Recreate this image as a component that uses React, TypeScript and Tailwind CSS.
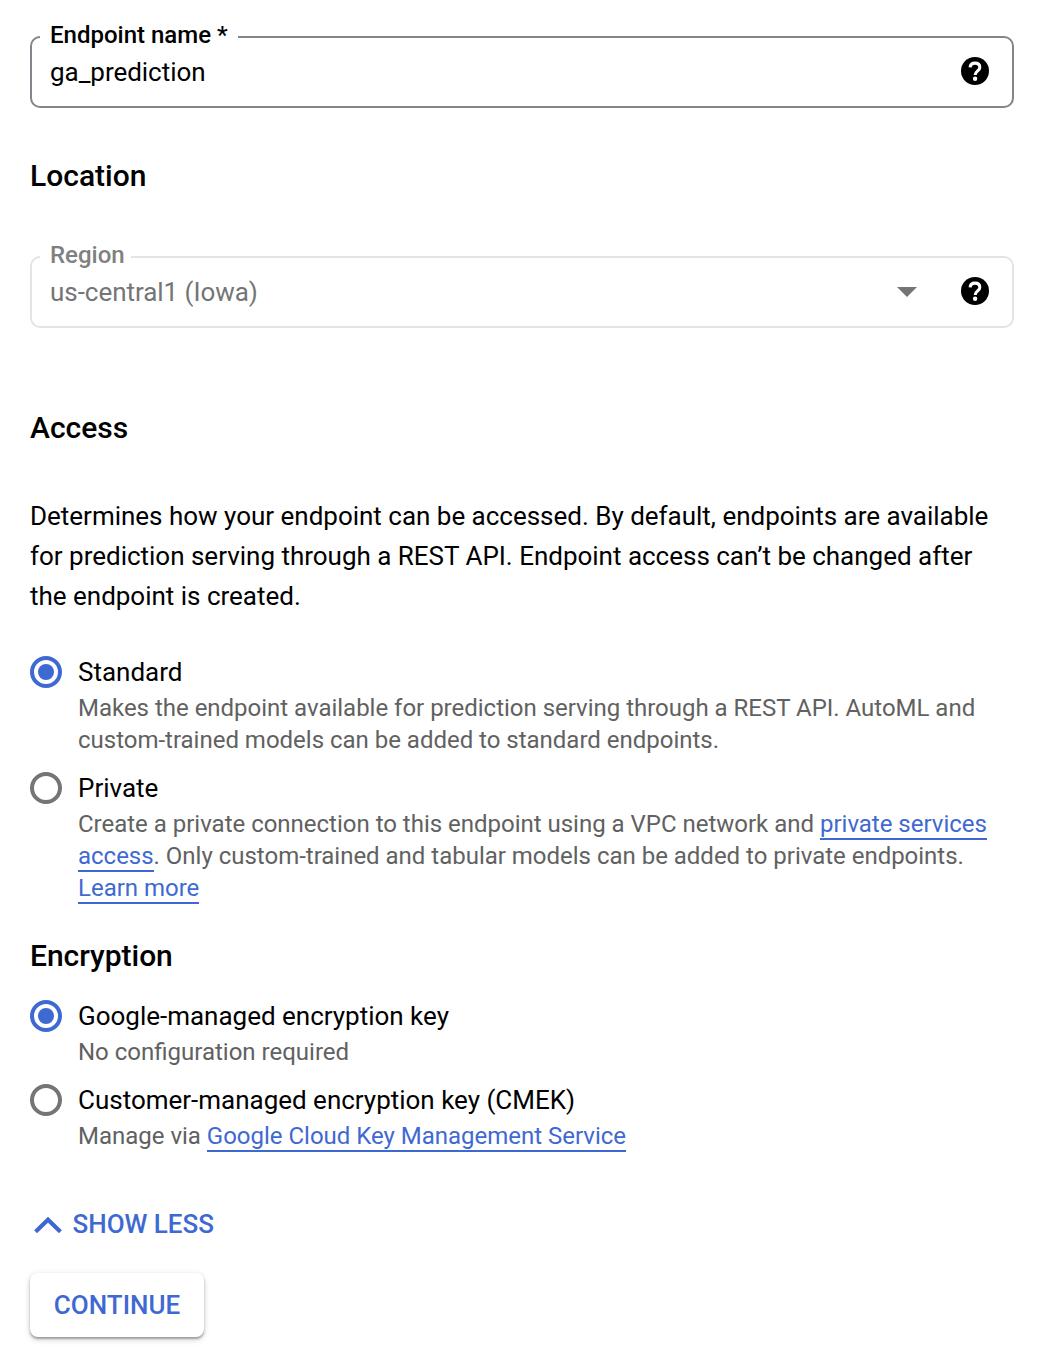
import type { ReactNode } from "react";

function Help() {
  return (
    <svg className="mb-0.5 h-[34px] w-[34px] shrink-0" viewBox="0 0 34 34">
      <circle cx="17" cy="17" r="14" fill="#000" />
      <path d="M12.1 13.4c.2-2.7 2.1-4.3 4.9-4.3 2.9 0 4.8 1.7 4.8 4.3 0 3.5-4.6 3.6-4.6 7.7" fill="none" stroke="#fff" strokeWidth="3.1" />
      <circle cx="17.1" cy="24.8" r="2.2" fill="#fff" />
    </svg>
  );
}

function Radio({ on, label, children, className }: { on?: boolean; label: string; children: ReactNode; className: string }) {
  return (
    <div className={`flex gap-4 ${className}`}>
      <div className={`mt-1 flex size-8 shrink-0 items-center justify-center rounded-full border-4 ${on ? "border-[#3f69d2]" : "border-[#757575]"}`}>
        {on && <div className="size-4 rounded-full bg-[#3f69d2]" />}
      </div>
      <div>
        <div className="text-[26px] leading-10 tracking-[-0.01px]">{label}</div>
        <div className="whitespace-nowrap text-[24px] leading-8 tracking-[-0.012px] text-[#616161]">{children}</div>
      </div>
    </div>
  );
}

function Link({ children }: { children: ReactNode }) {
  return <a className="border-b-2 border-[#3f69d2] text-[#3f69d2]">{children}</a>;
}

export default function App() {
  return (
    <main className="h-[1356px] w-[1042px] overflow-hidden bg-white px-[30px] pt-[22px] font-['Roboto',sans-serif] text-black">
      <fieldset className="h-[86px] w-[984px] rounded-[10px] border-2 border-[#80868b] pl-2 pr-[20px]">
        <legend className="h-[30px] px-[10px] text-[24px] leading-[26px] font-medium">Endpoint name *</legend>
        <div className="flex h-10 items-center justify-between pl-[10px]">
          <span className="text-[26px] tracking-[-0.04px]">ga_prediction</span>
          <Help />
        </div>
      </fieldset>
      <h2 className="mt-12 text-[30px] leading-10 font-medium">Location</h2>
      <fieldset className="mt-[46px] h-[86px] w-[984px] rounded-[10px] border-2 border-[#e4e4e4] pl-2 pr-[20px]">
        <legend className="h-[30px] pl-[10px] pr-1.5 text-[24px] leading-[26px] font-medium text-[#808080]">Region</legend>
        <div className="flex h-10 items-center pl-[10px]">
          <span className="flex-1 text-[26px] tracking-[-0.04px] text-[#757575]">us-central1 (Iowa)</span>
          <svg className="mr-[41px] h-[10px] w-5" viewBox="0 0 20 10"><path d="M0 0h20L10 10z" fill="#757575" /></svg>
          <Help />
        </div>
      </fieldset>
      <h2 className="mt-20 text-[30px] leading-10 font-medium">Access</h2>
      <p className="mt-12 whitespace-nowrap text-[26px] leading-10 tracking-[-0.012px]">
        Determines how your endpoint can be accessed. By default, endpoints are available<br />
        for prediction serving through a REST API. Endpoint access can’t be changed after<br />
        the endpoint is created.
      </p>
      <Radio on label="Standard" className="mt-9">
        Makes the endpoint available for prediction serving through a REST API. AutoML and<br />
        custom-trained models can be added to standard endpoints.
      </Radio>
      <Radio label="Private" className="mt-3">
        Create a private connection to this endpoint using a VPC network and <Link>private services<br />access</Link>. Only custom-trained and tabular models can be added to private endpoints.<br />
        <Link>Learn more</Link>
      </Radio>
      <h2 className="mt-8 text-[30px] leading-10 font-medium tracking-[-0.03px]">Encryption</h2>
      <Radio on label="Google-managed encryption key" className="mt-5"><span className="tracking-normal">No configuration required</span></Radio>
      <Radio label="Customer-managed encryption key (CMEK)" className="mt-3">
        Manage via <Link>Google Cloud Key Management Service</Link>
      </Radio>
      <button className="mt-[52px] flex h-10 items-center gap-[10.5px] pl-1 text-[26px] font-medium tracking-[-0.03px] text-[#3f69d2]">
        <svg className="h-[17px] w-7" viewBox="0 0 28 17"><path d="M1.6 15.7 14 3.7 26.4 15.7" fill="none" stroke="currentColor" strokeWidth="4.2" /></svg>
        SHOW LESS
      </button>
      <button className="mt-[29px] flex h-16 w-[174px] items-center justify-center rounded-lg bg-white text-[26px] font-medium text-[#3f69d2] shadow-[0_2px_2px_rgba(0,0,0,.28),0_3px_6px_rgba(0,0,0,.14),0_0_6px_rgba(0,0,0,.06)]">CONTINUE</button>
    </main>
  );
}
